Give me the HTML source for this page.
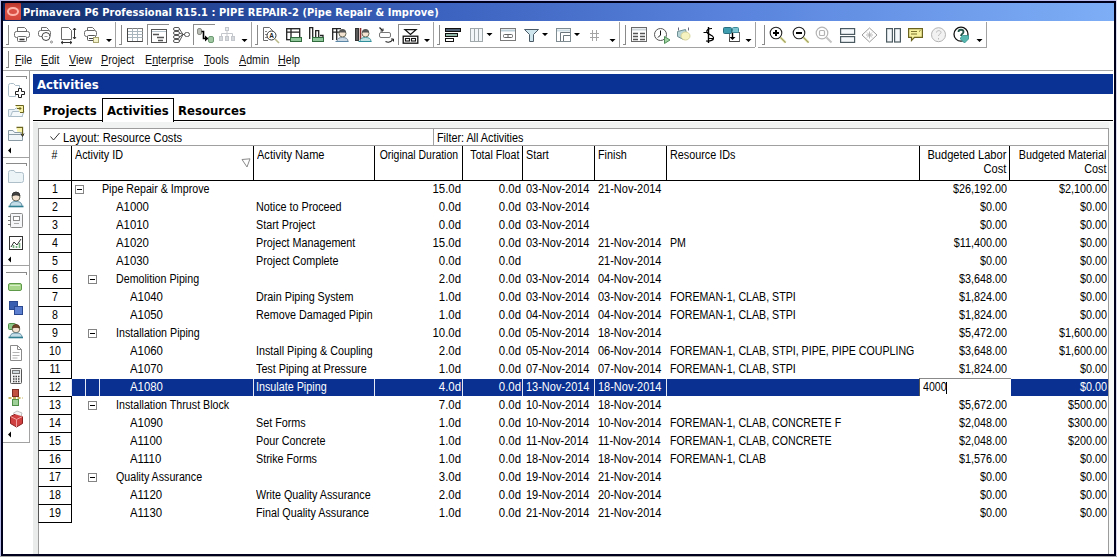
<!DOCTYPE html><html><head><meta charset="utf-8"><title>Primavera P6 Professional R15.1</title><style>html,body{margin:0;padding:0}
body{width:1117px;height:557px;position:relative;overflow:hidden;background:#fff;font-family:"Liberation Sans",sans-serif;font-size:12px;color:#000}
div,span,i,b{box-sizing:border-box}
.abs{position:absolute}
#frame{position:absolute;left:0;top:0;width:1117px;height:557px;background:#b9bdec}
#win{position:absolute;left:1px;top:1px;width:1115px;height:555px;background:#00001c}
#client{position:absolute;left:3px;top:3px;width:1111px;height:551px;background:#fff}
#rb{position:absolute;left:1116px;top:0;width:1px;height:557px;background:#d9dcec}
#bb{position:absolute;left:0;top:556px;width:1117px;height:1px;background:#a8a8a8}
#title{position:absolute;left:3px;top:3px;width:1111px;height:18px;background:linear-gradient(90deg,#0b1f58 0,rgb(16,46,106) 2%,rgb(37,70,150) 19%,rgb(59,98,190) 39%,rgb(88,130,220) 65%,rgb(126,174,246) 100%)}
#title .ico{position:absolute;left:2px;top:0;width:16px;height:17px;background:linear-gradient(180deg,#b8352c 0,#dc5246 45%,#d4453a 100%);border-radius:1px}
#title .ico i{position:absolute;left:2px;top:4px;width:12px;height:9px;border:2px solid #ffb4aa;border-radius:50%}
#title span{position:absolute;left:20px;top:3px;font:bold 11px "DejaVu Sans Condensed","DejaVu Sans","Liberation Sans",sans-serif;color:#fff;letter-spacing:0.07px;white-space:nowrap}
.tb{position:absolute;top:21px;height:27px;border-right:1px solid #9a9a9a;border-bottom:1px solid #a6a6a6;background:#fff}
.grip{position:absolute;top:4px;width:3px;height:19px;border-right:1px solid #8c8c8c;border-bottom:1px solid #8c8c8c}
.ic{position:absolute;top:0;left:0}
.dd{position:absolute;width:0;height:0;border-left:3px solid transparent;border-right:3px solid transparent;border-top:3px solid #000}
#menu{position:absolute;left:3px;top:48px;width:1110px;height:23px;border-bottom:1px solid #a6a6a6;font:12.5px "Liberation Sans",sans-serif}
#menu span{position:absolute;top:5px;white-space:nowrap;color:#111;transform:scaleX(.855);transform-origin:0 0}
#menu u{text-decoration:underline;text-underline-offset:1px}
#side{position:absolute;left:3px;top:71px;width:27px;height:372px;border-right:1px solid #9a9a9a;border-bottom:1px solid #a6a6a6}
.sl{position:absolute;left:3px;width:21px;height:3px;border-top:1px solid #8c8c8c;border-right:1px solid #8c8c8c}
.la{position:absolute;left:5px;width:0;height:0;border-top:3px solid transparent;border-bottom:3px solid transparent;border-right:3px solid #000}
#banner{position:absolute;left:33px;top:74px;width:1080px;height:20px;background:#0a3194;color:#fff}
#banner span{position:absolute;left:4px;top:3px;font:bold 13px "DejaVu Sans Condensed","Liberation Sans",sans-serif;letter-spacing:0}
#tabs{position:absolute;left:33px;top:97px;width:1080px;height:24px;border-bottom:1px solid #000}
#tabs span{position:absolute;top:6px;font:bold 13px "DejaVu Sans Condensed","Liberation Sans",sans-serif;letter-spacing:0;white-space:nowrap}
#tabs .act{position:absolute;left:69px;top:1px;width:72px;height:24px;border:1px solid #000;border-bottom:0;background:#fff}
#lstrip{position:absolute;left:33px;top:122px;width:5px;height:432px;background:#e9eceb}
#tstrip{position:absolute;left:33px;top:122px;width:1080px;height:6px;background:#f1f3f2}
#gridbox{position:absolute;left:38px;top:128px;width:1071px;height:426px;border-left:1px solid #9c9c9c;border-top:1px solid #9c9c9c;border-right:1px solid #9c9c9c;background:#fff}
#rstrip{position:absolute;left:1109px;top:122px;width:5px;height:432px;background:#f7f8f8}
#layout{position:absolute;left:39px;top:129px;width:1069px;height:17px;border-bottom:1px solid #a0a0a0}
#layout span{position:absolute;top:2px;white-space:nowrap;transform:scaleX(.885);transform-origin:0 0}
#filterbox{position:absolute;left:433px;top:129px;width:1px;height:16px;background:#a0a0a0}
#head{position:absolute;left:38px;top:146px;width:1071px;height:35px;border-bottom:1px solid #000}
.h{position:absolute;top:0;height:34px;border-left:1px solid #000;line-height:14px;padding-top:2px;white-space:nowrap}
.h span{display:block;transform:scaleX(.885)}
.h.l{padding-left:3px;text-align:left}.h.l span{transform-origin:0 0}
.h.r{text-align:right}.h.r span{position:absolute;right:4px;top:2px;text-align:right;transform-origin:100% 0}
.num span{display:block;transform:scaleX(.885)}
.row{position:absolute;left:0;width:1117px;height:18px}
.row .num{position:absolute;left:38px;top:0;width:34px;height:19px;border:1px solid #000;border-left-color:#555;text-align:center;line-height:17px;background:#fff}
.row .c{position:absolute;top:1px;height:17px;line-height:17px;white-space:nowrap;overflow:hidden}
.c.l{text-align:left;transform:scaleX(.885);transform-origin:0 0}.c.r{text-align:right;transform:scaleX(.885);transform-origin:100% 0}
.box{position:absolute;top:5px;width:9px;height:9px;border:1px solid #848484;background:#fff}
.box i{position:absolute;left:1px;top:3px;width:5px;height:1px;background:#000}
.row.sel{color:#fff}
.row.sel::before{content:"";position:absolute;left:72px;top:1px;width:1036px;height:17px;background:#0a3192}
.row.sel .num{color:#000}
.vs{position:absolute;top:1px;width:1px;height:17px;background:#e6eaf4}
.edit{position:absolute;top:0;height:18px;background:#fff;border-top:1px solid #8a8a8a;border-left:1px solid #555;color:#000}
.edit span{position:absolute;left:3px;top:0;line-height:17px;transform:scaleX(.885);transform-origin:0 0}
.edit b{position:absolute;left:26px;top:3px;width:1px;height:12px;background:#000}
</style></head><body>
<div id="frame"></div><div id="win"></div><div id="client"></div><div id="rb"></div><div id="bb"></div>
<div id="title"><div class="ico"><i></i></div><span>Primavera P6 Professional R15.1 : PIPE REPAIR-2 (Pipe Repair &amp; Improve)</span></div>

<!-- toolbar strip -->
<svg class="abs" style="left:0;top:21px" width="1117" height="28" viewBox="0 21 1117 28" fill="none" stroke-linecap="butt">
<!-- bottom lines + separators -->
<g stroke="#a2a2a2" stroke-width="1" shape-rendering="crispEdges">
<path d="M3 47.5H755M758 47.5H987"/>
<path d="M115.5 22V47M251.5 22V47M433.5 22V47M619.5 22V47M755.5 22V47M986.5 22V47"/>
</g>
<!-- grips -->
<g stroke="#8a8a8a" stroke-width="1" shape-rendering="crispEdges">
<path d="M8.5 25V44.5H6M121.5 25V44.5H119M257.5 25V44.5H255M439.5 25V44.5H437M625.5 25V44.5H623M764.5 25V44.5H762"/>
</g>
<!-- pressed frames -->
<g stroke="#8c8c8c" stroke-width="1" shape-rendering="crispEdges">
<path d="M147.5 45V24.5H169M193.5 45V24.5H215M398.5 45V24.5H420"/>
</g>
<!-- dropdown arrows -->
<g fill="#000" stroke="none">
<path d="M106 39h6l-3 3zM241.5 39h6l-3 3zM424 39h6l-3 3zM486.5 33h6l-3 3zM542 33h6l-3 3zM574 33h6l-3 3zM609.5 39h6l-3 3zM745.5 39h6l-3 3zM976.5 39h6l-3 3z"/>
</g>

<g stroke="#6a6a6a" stroke-width="1" fill="#fff">
<path fill="none" d="M17.5 31.5V27.5H24.5L26.5 29.5V31.5"/>
<rect x="14.5" y="31.5" width="15" height="6" rx="2"/>
<rect x="17.5" y="36.5" width="9" height="5" rx="1"/>
<path fill="none" d="M19.5 39.5H24.5" stroke="#333" stroke-width="1.6"/>
</g>
<g stroke="#6a6a6a" stroke-width="1" fill="#fff">
<path fill="none" d="M41.5 31V27.5H46.5L48.5 29.5V31"/>
<rect x="38.5" y="30.5" width="12" height="6" rx="2"/>
<circle cx="46" cy="36.5" r="4" stroke="#444"/>
<path fill="none" d="M44.5 36.5h3" stroke="#999"/>
<circle cx="51.5" cy="42" r="1" stroke="#888"/>
</g>
<g stroke="#6a6a6a" stroke-width="1" fill="#fff">
<path d="M61.5 27.5H68.5L71.5 30.5V39.5H61.5z"/>
<path fill="none" d="M74.5 28V39" stroke="#333"/><path d="M73 30l1.500 -2l1.500 2M73 37l1.500 2l1.500 -2" stroke="#333" fill="none"/>
<path fill="none" d="M61 42.500H72" stroke="#333"/><path d="M63 41l-2 1.500l2 1.500M70 41l2 1.500l-2 1.500" stroke="#333" fill="none"/>
</g>
<g stroke="#6a6a6a" stroke-width="1" fill="#fff">
<path fill="none" d="M87.500 30.500V27.500H92.500L94.500 29.500V30.500"/>
<rect x="84.500" y="30.500" width="12" height="6" rx="2"/>
<rect x="87.500" y="35.500" width="8" height="5" rx="1" stroke="#555"/>
<path fill="none" d="M89 38.500H94" stroke="#444"/>
<rect x="93.500" y="37.500" width="5" height="5" fill="#f4f2c8" stroke="#a8a470"/>
</g>

<g stroke="#7a7a7a" stroke-width="1" fill="#fff">
<rect x="127.500" y="28.500" width="15" height="13"/>
<path fill="none" d="M127.500 31.500H142.500M127.500 34.500H142.500M127.500 37.500H142.500M132.500 28.500V41.500M137.500 28.500V41.500" stroke="#a9b6bd"/>
<path fill="none" d="M127.500 28.500V41.500H142.500" stroke="#444"/>
</g>
<g stroke="#6a6a6a" stroke-width="1" fill="#fff">
<rect x="151.500" y="29.500" width="15" height="13" stroke="#555"/>
<path fill="none" d="M152 31.500H166" stroke="#b5c4cc"/>
<path fill="none" d="M153 34.500H159M157 37.500H164M158 40.500H163" stroke="#555" stroke-width="1.600"/>
</g>
<g stroke="#555" stroke-width="1" fill="#fff">
<rect x="173.500" y="27.500" width="6" height="3" rx="1.500"/><rect x="173.500" y="31.500" width="6" height="3" rx="1.500"/><rect x="173.500" y="35.500" width="6" height="3" rx="1.500"/><rect x="173.500" y="39.500" width="6" height="3" rx="1.500"/>
<path d="M179.500 29L183 34.500L179.500 41M179.500 33L183 34.500L179.500 37M183 34.500H185" fill="none"/>
<rect x="184.500" y="32.500" width="5" height="4" rx="2"/>
</g>
<g stroke-width="1">
<rect x="197.500" y="28.500" width="4" height="6" rx="1.500" fill="#b8bcb4" stroke="#8a8e86"/>
<path d="M201.500 31.500H203.500V38.500H207" stroke="#000" stroke-width="1.600" fill="none"/>
<path d="M205 35.500l3.500 3l-3.500 3z" fill="#000" stroke="none"/>
<rect x="208.500" y="36.500" width="5" height="6" rx="1.500" fill="#9fc7a2" stroke="#6d9a72"/>
</g>
<g stroke="#c4c8cc" stroke-width="1" fill="#e9ecee">
<rect x="225.500" y="27.500" width="3" height="3"/>
<path d="M221.500 36V33.500H232.500V36M227 31V36" fill="none"/>
<rect x="219.500" y="36.500" width="3" height="4" fill="#d5d9dc"/><rect x="225.500" y="36.500" width="3" height="4" fill="#d5d9dc"/><rect x="231.500" y="36.500" width="3" height="4" fill="#d5d9dc"/>
</g>

<g stroke="#6a6a6a" stroke-width="1" fill="#fff">
<path fill="none" d="M263.500 27.500H269.500L272.500 30.500V32M263.500 27.500V40.500H268"/>
<path fill="none" d="M265 31.500H267M265 34.500H267M265 37.500H267" stroke="#888"/>
<circle cx="271.500" cy="35.500" r="4.500" stroke="#333"/><text x="271.500" y="38" font-family="Liberation Sans, sans-serif" font-size="6.500" font-weight="bold" text-anchor="middle" fill="#222" stroke="none">A</text>
<path fill="none" d="M275 39l4 4" stroke="#b9b98a" stroke-width="1.600"/>
</g>
<g stroke="#222" stroke-width="1.300" fill="#fff">
<rect x="286.700" y="28.700" width="13" height="11"/>
<path fill="none" d="M287 32.200H300M291 28.700V40"/>
<rect x="290.500" y="37.500" width="11" height="4" fill="#8fc79a" stroke="#2f6b3c" stroke-width="1"/>
</g>
<g stroke="#222" stroke-width="1.300" fill="#fff">
<path fill="none" d="M309.700 39V27.700H312.700V39M315.700 39V30.700H318.700V39"/>
<path d="M320 35.500h3v3" fill="none"/>
<rect x="312.500" y="37.500" width="11" height="4" fill="#8fc79a" stroke="#2f6b3c" stroke-width="1"/>
</g>
<g stroke-width="1">
<path d="M332.700 40V28.700H341M336.700 28.700V40M333 32.200H340" stroke="#222" stroke-width="1.300" fill="none"/>
<circle cx="342.500" cy="33.500" r="3.500" fill="#f3e3d0" stroke="#6b6b5a"/>
<path d="M339 32.500a3.500 3.500 0 0 1 7 0z" fill="#555" stroke="none"/>
<path d="M337 41.500c0-3 2-4 5.500-4s5.500 1 5.500 4z" fill="#c9d6e4" stroke="#7a8a9a"/>
<path fill="none" d="M335.500 41.500H348.500" stroke="#5a87a8"/>
</g>
<g stroke-width="1">
<rect x="355.500" y="28.500" width="3" height="12" fill="#5a5a5a" stroke="#333"/>
<path fill="none" d="M360.500 28V40" stroke="#8c2f2f" stroke-width="1.600"/>
<circle cx="365.500" cy="33.500" r="3.500" fill="#f3e3d0" stroke="#6b6b5a"/>
<path d="M362 32.500a3.500 3.500 0 0 1 7 0z" fill="#555" stroke="none"/>
<path d="M360 41.500c0-3 2-4 5.500-4s5.500 1 5.500 4z" fill="#bfe0e2" stroke="#4a98a0"/>
<path fill="none" d="M358.500 41.500H371.500" stroke="#2f8f9a"/>
</g>
<g stroke="#777" stroke-width="1" fill="#fff">
<rect x="379.500" y="32.500" width="11" height="5" rx="1.500"/>
<path fill="none" d="M379.500 27.500l3 3" stroke="#222" stroke-width="1.300"/><path d="M380.500 31h2.500v-2.500" stroke="#222" fill="none"/>
<path d="M385.500 41.500c3 1.500 6 0 7.500-2" stroke="#222" fill="none" stroke-width="1.200"/><path d="M391 39h2.500v2.500" stroke="#222" fill="none"/>
</g>
<g stroke="#111" stroke-width="1.300" fill="#fff">
<path d="M405 29.700H416L410.500 34.500z"/>
<rect x="403.200" y="36.200" width="14.600" height="7"/>
<rect x="405.500" y="38.500" width="4" height="2.500" stroke-width="1.100"/><rect x="411.500" y="38.500" width="4" height="2.500" stroke-width="1.100"/>
</g>

<g stroke="#111" stroke-width="1" >
<rect x="445.500" y="28.500" width="15" height="3" fill="#4f5f73"/>
<rect x="445.500" y="33.500" width="12" height="3" fill="#8fb6a6"/>
<rect x="445.500" y="38.500" width="8" height="3" fill="#fff"/>
</g>
<g stroke="#a0a8ac" stroke-width="1" fill="#f2f6f8">
<rect x="470.500" y="28.500" width="4" height="13"/><rect x="474.500" y="28.500" width="4" height="13"/><rect x="478.500" y="28.500" width="4" height="13"/>
</g>
<g stroke="#7a7a7a" stroke-width="1" fill="#fff">
<rect x="500.500" y="28.500" width="15" height="12"/>
<path fill="none" d="M501 30.500H515" stroke="#bcd0da" stroke-width="2"/>
<rect x="503.500" y="34.500" width="9" height="3" rx="1" stroke="#666"/><path fill="none" d="M508 34.500v3" stroke="#666"/>
</g>
<g stroke="#4a5a66" stroke-width="1" fill="#cfe6ee">
<path d="M524.500 29.500H538.500L533.500 34.500V41.500H529.500V34.500z"/>
</g>
<g stroke="#7f8c92" stroke-width="1" fill="#fff">
<rect x="556.500" y="28.500" width="14" height="13"/>
<path fill="none" d="M557 30.500H570" stroke="#cfdde4" stroke-width="2"/>
<path d="M560.500 41V32.500H570M563.500 41V35.500H570" fill="none" stroke="#6a767c"/>
</g>
<g stroke="#a4a4a4" stroke-width="1" fill="none">
<path fill="none" d="M592.500 30V41M596.500 30V41M590 33.500H599M590 37.500H599"/>
</g>

<g stroke="#6a6a6a" stroke-width="1" fill="#fff">
<rect x="631.500" y="27.500" width="15" height="14"/>
<path fill="none" d="M632 29.500H646" stroke="#cfd6da" stroke-width="2"/>
<path fill="none" d="M633 33.500H638M640 33.500H645M633 36.500H638M640 36.500H645M633 39.500H638M640 39.500H645" stroke="#555" stroke-width="1.600"/>
</g>
<g stroke="#555" stroke-width="1" fill="#fff">
<circle cx="660.500" cy="34.500" r="6"/>
<path d="M660.500 30.500V35L658 37.500" stroke="#111" fill="none"/>
<path d="M664.500 36.500l5.500 3.500l-5.500 3.500z" fill="#9fd0a0" stroke="#4f8f58"/>
</g>
<g stroke-width="1">
<path fill="none" d="M678.500 27.500v3M688.500 27.500v3" stroke="#667"/>
<path d="M677.500 31.500l8-2l2 8l-4 2l-6-3z" fill="#b6d3d6" stroke="#6f9095"/>
<ellipse cx="685.500" cy="36" rx="4.500" ry="4" fill="#f7f3c0" stroke="#d8d49a"/>
</g>
<g stroke="#000" stroke-width="1.400" fill="none">
<path fill="none" d="M708.500 27V43"/><path fill="none" d="M712 28.500c-4 0-6 2-5 4s6 2.500 6.500 5s-3 4-7.500 3.500" stroke-width="1.200"/>
<path fill="none" d="M703.500 32.500h5M708 38.500h6" stroke-width="1.200"/>
</g>
<g stroke-width="1">
<rect x="729.500" y="32.500" width="10" height="9" fill="#fff" stroke="#6a6a6a"/>
<rect x="723.500" y="27.500" width="8" height="6" rx="1" fill="#3f9db0" stroke="#2a6f80"/>
<rect x="732.500" y="27.500" width="6" height="5" rx="1" fill="#7cc4d0" stroke="#3c8a98"/>
<path fill="none" d="M732.500 33v5" stroke="#000" stroke-width="1.400"/><path d="M729.500 37h6l-3 3z" fill="#000" stroke="none"/>
<path d="M729.500 38.500v3h10" stroke="#444" fill="none"/>
</g>

<g stroke="#222" stroke-width="1.100" fill="#fff">
<circle cx="776" cy="33" r="5.800"/>
<path fill="none" d="M773 33h6M776 30v6" stroke="#000" stroke-width="2"/>
<path fill="none" d="M780.500 37.500l5 5" stroke="#cfd08a" stroke-width="2.400"/><path fill="none" d="M780.300 37.300l5.400 5.400" stroke="#8a8a5a" stroke-width="0.700"/>
</g>
<g stroke="#222" stroke-width="1.100" fill="#fff">
<circle cx="799" cy="33" r="5.800"/>
<path fill="none" d="M796 33h6" stroke="#000" stroke-width="2"/>
<path fill="none" d="M803.500 37.500l5 5" stroke="#cfd08a" stroke-width="2.400"/><path fill="none" d="M803.300 37.300l5.400 5.400" stroke="#8a8a5a" stroke-width="0.700"/>
</g>
<g stroke="#b4b4b4" stroke-width="1.200" fill="#fff">
<circle cx="822" cy="33" r="5.800"/>
<rect x="819.500" y="30.500" width="5" height="5" rx="1"/>
<path fill="none" d="M826.500 37.500l5 5" stroke="#c4c4c4" stroke-width="2"/>
</g>
<g stroke="#4a5a60" stroke-width="1.200" fill="#f4f8fa">
<rect x="840.600" y="28.600" width="14" height="5.800"/><rect x="840.600" y="36.600" width="14" height="5.800"/>
</g>
<g stroke="#9a9a9a" stroke-width="1" fill="#fff">
<path d="M869.500 28l7.500 7l-7.500 7l-7.500-7z"/>
<path fill="none" d="M869.500 31.500v7M866 35h7M867 32.500l5 5M872 32.500l-5 5" stroke="#aaa" stroke-width="0.800"/>
</g>
<g stroke="#4a5a60" stroke-width="1.200" fill="#f4f8fa">
<rect x="886.600" y="28.600" width="5.800" height="13.400"/><rect x="894.600" y="28.600" width="5.800" height="13.400"/>
</g>
<g stroke="#6a6420" stroke-width="1.200" fill="#f7f2a0">
<path d="M908.600 28.600H922.400V37.400H914.500L911.500 40.500V37.400H908.600z"/>
<path d="M911 31.500h6M911 34h6M919 31.500l1.500-1" stroke="#6a6420" stroke-width="0.900" fill="none"/>
</g>
<g stroke="#b4b4b4" stroke-width="1" fill="#f2f2f2">
<circle cx="938.500" cy="34.700" r="7"/>
<path d="M936.500 32.500c0-2.500 4.500-2.500 4.500 0c0 1.500-2.500 1.500-2.500 3.500M938.500 38v1.500" fill="none" stroke="#bcbcbc"/>
</g>
<g stroke="#111" stroke-width="1.300" fill="#fff">
<circle cx="961" cy="34.200" r="7"/>
<path d="M958.500 32c0-3 5-3 5 0c0 1.800-2.500 1.800-2.500 4" fill="none" stroke="#23544a" stroke-width="1.800"/>
<path d="M962.500 35.500h6v3.500l-4 4l-4-4v-1z" fill="#56b7b0" stroke="#2f8f8a" stroke-width="0.800"/>
</g>

</svg>

<div id="menu">
<span style="left:12px"><u>F</u>ile</span><span style="left:38px"><u>E</u>dit</span><span style="left:66px"><u>V</u>iew</span><span style="left:98px"><u>P</u>roject</span><span style="left:142px">E<u>n</u>terprise</span><span style="left:201px"><u>T</u>ools</span><span style="left:236px"><u>A</u>dmin</span><span style="left:275px"><u>H</u>elp</span>
</div>
<svg class="abs" style="left:3px;top:48px" width="12" height="23" viewBox="3 48 12 23" fill="none" shape-rendering="crispEdges"><path d="M8.5 51V67.5H6" stroke="#8a8a8a"/></svg>

<!-- sidebar -->
<svg class="abs" style="left:0;top:71px" width="33" height="375" viewBox="0 71 33 375" fill="none">
<g stroke="#a2a2a2" shape-rendering="crispEdges"><path d="M29.5 71V443M3 442.5H30M3 157.5H29M3 265.5H29"/></g>
<g stroke="#8a8a8a" shape-rendering="crispEdges"><path d="M6 76.5H26.5V79M6 163.5H26.5V166M6 272.5H26.5V275"/></g>
<g fill="#000" stroke="none"><path d="M11 147.5v6l-3-3zM11 256.5v6l-3-3zM11 431.5v6l-3-3z"/></g>

<g stroke="#a9bcc8" stroke-width="1" fill="#eaf2f7">
<path fill="none" d="M8.500 95.500V85.500Q8.500 83.500 10.500 83.500H13.500L15.500 85.500H19.500V88M8.500 95.500Q8.500 96.500 10 96.500H15.500V94.500"/>
</g>
<path d="M18.500 88.500h3v3h3v3h-3v3h-3v-3h-3v-3h3z" fill="#fff" stroke="#222" stroke-width="1"/>
<g stroke-width="1">
<path d="M8.500 116.500V109.500H14.500L16 108H22.500V116.500z" fill="#eaf2f7" stroke="#a9bcc8"/>
<path d="M10.500 116.500L12.500 111.500H24L22 116.500z" fill="#f4f8fa" stroke="#a9bcc8"/>
<path d="M15.500 105.500H23.500V112.500H20" fill="#f7f2a8" stroke="#6a6420"/>
<path d="M17 108.500h4M19.500 107l1.500 1.500l-1.500 1.500" stroke="#6a6420" fill="none"/>
</g>
<g stroke-width="1">
<path d="M8.500 140.500V130.500H13L14.500 132.500H22.500V140.500z" fill="#f0f5f8" stroke="#8a9aa4"/>
<path fill="none" d="M8.500 134.500H22.500" stroke="#8a9aa4"/>
<path d="M16.500 127.500H22.500V136" fill="none" stroke="#6a6420" stroke-width="1.300"/>
<path d="M17 131.500V128H22V132.500" fill="#f7f2a8" stroke="none"/>
<path d="M21 133.500l1.500 3l1.500-3" stroke="#333" fill="none"/>
</g>

<g stroke-width="1">
<path d="M8.500 182.500V172.500Q8.500 170.500 10.500 170.500H14L15.500 172.500H21.500Q23.500 172.500 23.500 174.500V180.500Q23.500 182.500 21.500 182.500z" fill="#edf4f8" stroke="#aebfca"/>
</g>
<g stroke-width="1">
<circle cx="16" cy="197" r="4" fill="#f3e3d0" stroke="#6b6b5a"/>
<path d="M12 196a4 4 0 0 1 8 0c-2-1.500-6-1.500-8 0z" fill="#444" stroke="#333"/>
<path d="M10 206.500c0-4 2.500-5 6-5s6 1 6 5z" fill="#c4dde6" stroke="#5a8aa0"/>
<path fill="none" d="M8.500 206.500H23.500" stroke="#2f7f90" stroke-width="1.600"/>
</g>
<g stroke="#8a8a8a" stroke-width="1" fill="#f4f6f7">
<rect x="10.500" y="213.500" width="12" height="14" rx="1"/>
<rect x="13.500" y="216.500" width="6" height="4" fill="#fff"/>
<path fill="none" d="M8 216.500h3M8 220.500h3M8 224.500h3" stroke="#777"/>
<path fill="none" d="M14 223.500h5" stroke="#aaa"/>
</g>
<g stroke-width="1">
<rect x="9.500" y="236.500" width="13" height="13" fill="#fff" stroke="#333"/>
<path d="M11 247l3-5l3 3l4-6" stroke="#333" fill="none"/>
<path fill="none" d="M13.500 248v-3M16.500 248v-2M19.500 248v-5" stroke="#6fae7a" stroke-width="1.600"/>
</g>

<rect x="8.500" y="283.500" width="13" height="7" rx="1.500" fill="#a8d78c" stroke="#5f9a4a"/>
<path fill="none" d="M10 285.500h10" stroke="#d6efc6"/>
<rect x="9.500" y="301.500" width="8" height="8" fill="#3a5fb0" stroke="#2a4890"/>
<rect x="14.500" y="306.500" width="8" height="8" fill="#5c7fd0" stroke="#2a4890"/>
<g stroke-width="1">
<rect x="8.500" y="323.500" width="7" height="6" rx="1" fill="#8fc78a" stroke="#4f8f4a"/>
<circle cx="16" cy="329" r="3.800" fill="#f3e3d0" stroke="#6b6b5a"/>
<path d="M12.500 328a3.500 3.500 0 0 1 7 0c-2-1-5-1-7 0z" fill="#7a4a2a" stroke="#5a3a20"/>
<path d="M10 337.500c0-3.500 2.500-4.500 6-4.500s6 1 6 4.500z" fill="#c4dde6" stroke="#5a8aa0"/>
<path fill="none" d="M8.500 337.500H23" stroke="#2f7f90" stroke-width="1.600"/>
</g>
<g stroke="#8a8a8a" stroke-width="1" fill="#fff">
<path d="M10.500 345.500H17.500L21.500 349.500V360.500H10.500z"/><path d="M17.500 345.500V349.500H21.500" fill="none"/>
<path fill="none" d="M12.500 352.500h7M12.500 355.500h7M12.500 358h5" stroke="#b4b4b4"/>
</g>
<g stroke="#555" stroke-width="1" fill="#f4f4f4">
<rect x="10.500" y="368.500" width="11" height="15" rx="1"/>
<rect x="12.500" y="370.500" width="7" height="3" fill="#cfd8dc" stroke="#777"/>
<path fill="none" d="M13 376.500h1.500M15.500 376.500h1.500M18 376.500h1.500M13 379h1.500M15.500 379h1.500M18 379h1.500M13 381.500h1.500M15.500 381.500h1.500M18 381.500h1.500" stroke="#444" stroke-width="1.400"/>
</g>
<g stroke-width="1">
<rect x="12.500" y="389.500" width="6" height="7" fill="#c05040" stroke="#7a2a20"/>
<rect x="12.500" y="399.500" width="6" height="6" fill="#9fd09a" stroke="#4f8f4a"/>
<path fill="none" d="M8.500 398h14" stroke="#b8a030" stroke-width="1.600" stroke-dasharray="3 1.500"/>
</g>
<g stroke-width="1">
<path d="M10.500 416.500l6-3l6 3v7l-6 3.500l-6-3.500z" fill="#d04040" stroke="#8a2020"/>
<path d="M10.500 416.500l6 3l6-3M16.500 419.500v7.500" stroke="#f0a0a0" fill="none"/>
<path d="M13 413.500l4-2.500l5 2l-1 3" fill="#f4f4f4" stroke="#c0c0c0"/>
</g>

</svg>

<div id="banner"><span>Activities</span></div>
<div id="tabs"><div class="act"></div><span style="left:10px">Projects</span><span style="left:74px">Activities</span><span style="left:145px">Resources</span></div>
<div id="tstrip"></div><div id="lstrip"></div><div id="rstrip"></div>
<div id="gridbox"></div>
<div id="layout"><svg class="abs" style="left:11px;top:3px" width="10" height="9" viewBox="0 0 10 9" fill="none" stroke="#333" stroke-width="1"><path d="M0.5 4.5L3.5 8L9.5 1"/></svg><span style="left:24px;transform:scaleX(.93)">Layout: Resource Costs</span><span style="left:398px;transform:scaleX(.9)">Filter: All Activities</span></div>
<div id="filterbox"></div>
<div id="head">
<div class="h" style="left:0px;width:33px;border-left:0;text-align:center"><span style="transform:scaleX(0.885)">#</span></div>
<div class="h l" style="left:33px;width:182px"><span style="transform:scaleX(0.9)">Activity ID</span></div>
<div class="h l" style="left:215px;width:121px"><span style="transform:scaleX(0.92)">Activity Name</span></div>
<div class="h r" style="left:336px;width:88px"><span style="transform:scaleX(0.87);right:4px">Original Duration</span></div>
<div class="h r" style="left:424px;width:60px"><span style="transform:scaleX(0.885);right:2.5px">Total Float</span></div>
<div class="h l" style="left:484px;width:72px"><span style="transform:scaleX(0.9)">Start</span></div>
<div class="h l" style="left:556px;width:72px"><span style="transform:scaleX(0.9)">Finish</span></div>
<div class="h l" style="left:628px;width:253px"><span style="transform:scaleX(0.9)">Resource IDs</span></div>
<div class="h r" style="left:881px;width:90px"><span style="transform:scaleX(0.925);right:2.5px">Budgeted Labor<br>Cost</span></div>
<div class="h r" style="left:971px;width:99px"><span style="transform:scaleX(0.9);right:2px">Budgeted Material<br>Cost</span></div>
<svg class="abs" style="left:203px;top:12px" width="10" height="10" viewBox="0 0 10 10" fill="none" stroke="#8a8a8a" stroke-width="1"><path d="M1 1.5L9 0.8L6 9z"/></svg>
</div>

<div class="row" style="top:180px">
<div class="num"><span>1</span></div>
<div class="box" style="left:75px"><i></i></div>
<div class="c l" style="left:102px;width:167px;transform:scaleX(0.89)">Pipe Repair &amp; Improve</div>
<div class="c r" style="left:375px;width:86px;transform:scaleX(0.95)">15.0d</div>
<div class="c r" style="left:463px;width:58px;transform:scaleX(0.95)">0.0d</div>
<div class="c l" style="left:526px;width:73px;transform:scaleX(0.915)">03-Nov-2014</div>
<div class="c l" style="left:598px;width:73px;transform:scaleX(0.915)">21-Nov-2014</div>
<div class="c r" style="left:920px;width:87px;transform:scaleX(0.9)">$26,192.00</div>
<div class="c r" style="left:1010px;width:97px;transform:scaleX(0.9)">$2,100.00</div>
</div>
<div class="row" style="top:198px">
<div class="num"><span>2</span></div>
<div class="c l" style="left:116px;width:142px;transform:scaleX(0.95)">A1000</div>
<div class="c l" style="left:256px;width:130px;transform:scaleX(0.897)">Notice to Proceed</div>
<div class="c r" style="left:375px;width:86px;transform:scaleX(0.95)">0.0d</div>
<div class="c r" style="left:463px;width:58px;transform:scaleX(0.95)">0.0d</div>
<div class="c l" style="left:526px;width:73px;transform:scaleX(0.915)">03-Nov-2014</div>
<div class="c r" style="left:920px;width:87px;transform:scaleX(0.9)">$0.00</div>
<div class="c r" style="left:1010px;width:97px;transform:scaleX(0.9)">$0.00</div>
</div>
<div class="row" style="top:216px">
<div class="num"><span>3</span></div>
<div class="c l" style="left:116px;width:142px;transform:scaleX(0.95)">A1010</div>
<div class="c l" style="left:256px;width:130px;transform:scaleX(0.897)">Start Project</div>
<div class="c r" style="left:375px;width:86px;transform:scaleX(0.95)">0.0d</div>
<div class="c r" style="left:463px;width:58px;transform:scaleX(0.95)">0.0d</div>
<div class="c l" style="left:526px;width:73px;transform:scaleX(0.915)">03-Nov-2014</div>
<div class="c r" style="left:920px;width:87px;transform:scaleX(0.9)">$0.00</div>
<div class="c r" style="left:1010px;width:97px;transform:scaleX(0.9)">$0.00</div>
</div>
<div class="row" style="top:234px">
<div class="num"><span>4</span></div>
<div class="c l" style="left:116px;width:142px;transform:scaleX(0.95)">A1020</div>
<div class="c l" style="left:256px;width:130px;transform:scaleX(0.897)">Project Management</div>
<div class="c r" style="left:375px;width:86px;transform:scaleX(0.95)">15.0d</div>
<div class="c r" style="left:463px;width:58px;transform:scaleX(0.95)">0.0d</div>
<div class="c l" style="left:526px;width:73px;transform:scaleX(0.915)">03-Nov-2014</div>
<div class="c l" style="left:598px;width:73px;transform:scaleX(0.915)">21-Nov-2014</div>
<div class="c l" style="left:670px;width:280px;transform:scaleX(0.885)">PM</div>
<div class="c r" style="left:920px;width:87px;transform:scaleX(0.9)">$11,400.00</div>
<div class="c r" style="left:1010px;width:97px;transform:scaleX(0.9)">$0.00</div>
</div>
<div class="row" style="top:252px">
<div class="num"><span>5</span></div>
<div class="c l" style="left:116px;width:142px;transform:scaleX(0.95)">A1030</div>
<div class="c l" style="left:256px;width:130px;transform:scaleX(0.897)">Project Complete</div>
<div class="c r" style="left:375px;width:86px;transform:scaleX(0.95)">0.0d</div>
<div class="c r" style="left:463px;width:58px;transform:scaleX(0.95)">0.0d</div>
<div class="c l" style="left:598px;width:73px;transform:scaleX(0.915)">21-Nov-2014</div>
<div class="c r" style="left:920px;width:87px;transform:scaleX(0.9)">$0.00</div>
<div class="c r" style="left:1010px;width:97px;transform:scaleX(0.9)">$0.00</div>
</div>
<div class="row" style="top:270px">
<div class="num"><span>6</span></div>
<div class="box" style="left:88px"><i></i></div>
<div class="c l" style="left:116px;width:152px;transform:scaleX(0.89)">Demolition Piping</div>
<div class="c r" style="left:375px;width:86px;transform:scaleX(0.95)">2.0d</div>
<div class="c r" style="left:463px;width:58px;transform:scaleX(0.95)">0.0d</div>
<div class="c l" style="left:526px;width:73px;transform:scaleX(0.915)">03-Nov-2014</div>
<div class="c l" style="left:598px;width:73px;transform:scaleX(0.915)">04-Nov-2014</div>
<div class="c r" style="left:920px;width:87px;transform:scaleX(0.9)">$3,648.00</div>
<div class="c r" style="left:1010px;width:97px;transform:scaleX(0.9)">$0.00</div>
</div>
<div class="row" style="top:288px">
<div class="num"><span>7</span></div>
<div class="c l" style="left:130px;width:127px;transform:scaleX(0.95)">A1040</div>
<div class="c l" style="left:256px;width:130px;transform:scaleX(0.897)">Drain Piping System</div>
<div class="c r" style="left:375px;width:86px;transform:scaleX(0.95)">1.0d</div>
<div class="c r" style="left:463px;width:58px;transform:scaleX(0.95)">0.0d</div>
<div class="c l" style="left:526px;width:73px;transform:scaleX(0.915)">03-Nov-2014</div>
<div class="c l" style="left:598px;width:73px;transform:scaleX(0.915)">03-Nov-2014</div>
<div class="c l" style="left:670px;width:280px;transform:scaleX(0.885)">FOREMAN-1, CLAB, STPI</div>
<div class="c r" style="left:920px;width:87px;transform:scaleX(0.9)">$1,824.00</div>
<div class="c r" style="left:1010px;width:97px;transform:scaleX(0.9)">$0.00</div>
</div>
<div class="row" style="top:306px">
<div class="num"><span>8</span></div>
<div class="c l" style="left:130px;width:127px;transform:scaleX(0.95)">A1050</div>
<div class="c l" style="left:256px;width:130px;transform:scaleX(0.897)">Remove Damaged Piping</div>
<div class="c r" style="left:375px;width:86px;transform:scaleX(0.95)">1.0d</div>
<div class="c r" style="left:463px;width:58px;transform:scaleX(0.95)">0.0d</div>
<div class="c l" style="left:526px;width:73px;transform:scaleX(0.915)">04-Nov-2014</div>
<div class="c l" style="left:598px;width:73px;transform:scaleX(0.915)">04-Nov-2014</div>
<div class="c l" style="left:670px;width:280px;transform:scaleX(0.885)">FOREMAN-1, CLAB, STPI</div>
<div class="c r" style="left:920px;width:87px;transform:scaleX(0.9)">$1,824.00</div>
<div class="c r" style="left:1010px;width:97px;transform:scaleX(0.9)">$0.00</div>
</div>
<div class="row" style="top:324px">
<div class="num"><span>9</span></div>
<div class="box" style="left:88px"><i></i></div>
<div class="c l" style="left:116px;width:152px;transform:scaleX(0.89)">Installation Piping</div>
<div class="c r" style="left:375px;width:86px;transform:scaleX(0.95)">10.0d</div>
<div class="c r" style="left:463px;width:58px;transform:scaleX(0.95)">0.0d</div>
<div class="c l" style="left:526px;width:73px;transform:scaleX(0.915)">05-Nov-2014</div>
<div class="c l" style="left:598px;width:73px;transform:scaleX(0.915)">18-Nov-2014</div>
<div class="c r" style="left:920px;width:87px;transform:scaleX(0.9)">$5,472.00</div>
<div class="c r" style="left:1010px;width:97px;transform:scaleX(0.9)">$1,600.00</div>
</div>
<div class="row" style="top:342px">
<div class="num"><span>10</span></div>
<div class="c l" style="left:130px;width:127px;transform:scaleX(0.95)">A1060</div>
<div class="c l" style="left:256px;width:130px;transform:scaleX(0.897)">Install Piping &amp; Couplings</div>
<div class="c r" style="left:375px;width:86px;transform:scaleX(0.95)">2.0d</div>
<div class="c r" style="left:463px;width:58px;transform:scaleX(0.95)">0.0d</div>
<div class="c l" style="left:526px;width:73px;transform:scaleX(0.915)">05-Nov-2014</div>
<div class="c l" style="left:598px;width:73px;transform:scaleX(0.915)">06-Nov-2014</div>
<div class="c l" style="left:670px;width:280px;transform:scaleX(0.885)">FOREMAN-1, CLAB, STPI, PIPE, PIPE COUPLING</div>
<div class="c r" style="left:920px;width:87px;transform:scaleX(0.9)">$3,648.00</div>
<div class="c r" style="left:1010px;width:97px;transform:scaleX(0.9)">$1,600.00</div>
</div>
<div class="row" style="top:360px">
<div class="num"><span>11</span></div>
<div class="c l" style="left:130px;width:127px;transform:scaleX(0.95)">A1070</div>
<div class="c l" style="left:256px;width:130px;transform:scaleX(0.897)">Test Piping at Pressure</div>
<div class="c r" style="left:375px;width:86px;transform:scaleX(0.95)">1.0d</div>
<div class="c r" style="left:463px;width:58px;transform:scaleX(0.95)">0.0d</div>
<div class="c l" style="left:526px;width:73px;transform:scaleX(0.915)">07-Nov-2014</div>
<div class="c l" style="left:598px;width:73px;transform:scaleX(0.915)">07-Nov-2014</div>
<div class="c l" style="left:670px;width:280px;transform:scaleX(0.885)">FOREMAN-1, CLAB, STPI</div>
<div class="c r" style="left:920px;width:87px;transform:scaleX(0.9)">$1,824.00</div>
<div class="c r" style="left:1010px;width:97px;transform:scaleX(0.9)">$0.00</div>
</div>
<div class="row sel" style="top:378px">
<div class="num"><span>12</span></div>
<div class="c l" style="left:130px;width:127px;transform:scaleX(0.95)">A1080</div>
<div class="c l" style="left:256px;width:130px;transform:scaleX(0.897)">Insulate Piping</div>
<div class="c r" style="left:375px;width:86px;transform:scaleX(0.95)">4.0d</div>
<div class="c r" style="left:463px;width:58px;transform:scaleX(0.95)">0.0d</div>
<div class="c l" style="left:526px;width:73px;transform:scaleX(0.915)">13-Nov-2014</div>
<div class="c l" style="left:598px;width:73px;transform:scaleX(0.915)">18-Nov-2014</div>
<div class="edit" style="left:919px;width:92px"><span>4000</span><b></b></div>
<div class="c r" style="left:1010px;width:97px;transform:scaleX(0.9)">$0.00</div>
<div class="vs" style="left:71px"></div>
<div class="vs" style="left:253px"></div>
<div class="vs" style="left:374px"></div>
<div class="vs" style="left:462px"></div>
<div class="vs" style="left:522px"></div>
<div class="vs" style="left:594px"></div>
<div class="vs" style="left:666px"></div>
<div class="vs" style="left:85px"></div><div class="vs" style="left:99px"></div>
</div>
<div class="row" style="top:396px">
<div class="num"><span>13</span></div>
<div class="box" style="left:88px"><i></i></div>
<div class="c l" style="left:116px;width:152px;transform:scaleX(0.89)">Installation Thrust Block</div>
<div class="c r" style="left:375px;width:86px;transform:scaleX(0.95)">7.0d</div>
<div class="c r" style="left:463px;width:58px;transform:scaleX(0.95)">0.0d</div>
<div class="c l" style="left:526px;width:73px;transform:scaleX(0.915)">10-Nov-2014</div>
<div class="c l" style="left:598px;width:73px;transform:scaleX(0.915)">18-Nov-2014</div>
<div class="c r" style="left:920px;width:87px;transform:scaleX(0.9)">$5,672.00</div>
<div class="c r" style="left:1010px;width:97px;transform:scaleX(0.9)">$500.00</div>
</div>
<div class="row" style="top:414px">
<div class="num"><span>14</span></div>
<div class="c l" style="left:130px;width:127px;transform:scaleX(0.95)">A1090</div>
<div class="c l" style="left:256px;width:130px;transform:scaleX(0.897)">Set Forms</div>
<div class="c r" style="left:375px;width:86px;transform:scaleX(0.95)">1.0d</div>
<div class="c r" style="left:463px;width:58px;transform:scaleX(0.95)">0.0d</div>
<div class="c l" style="left:526px;width:73px;transform:scaleX(0.915)">10-Nov-2014</div>
<div class="c l" style="left:598px;width:73px;transform:scaleX(0.915)">10-Nov-2014</div>
<div class="c l" style="left:670px;width:280px;transform:scaleX(0.885)">FOREMAN-1, CLAB, CONCRETE F</div>
<div class="c r" style="left:920px;width:87px;transform:scaleX(0.9)">$2,048.00</div>
<div class="c r" style="left:1010px;width:97px;transform:scaleX(0.9)">$300.00</div>
</div>
<div class="row" style="top:432px">
<div class="num"><span>15</span></div>
<div class="c l" style="left:130px;width:127px;transform:scaleX(0.95)">A1100</div>
<div class="c l" style="left:256px;width:130px;transform:scaleX(0.897)">Pour Concrete</div>
<div class="c r" style="left:375px;width:86px;transform:scaleX(0.95)">1.0d</div>
<div class="c r" style="left:463px;width:58px;transform:scaleX(0.95)">0.0d</div>
<div class="c l" style="left:526px;width:73px;transform:scaleX(0.915)">11-Nov-2014</div>
<div class="c l" style="left:598px;width:73px;transform:scaleX(0.915)">11-Nov-2014</div>
<div class="c l" style="left:670px;width:280px;transform:scaleX(0.885)">FOREMAN-1, CLAB, CONCRETE</div>
<div class="c r" style="left:920px;width:87px;transform:scaleX(0.9)">$2,048.00</div>
<div class="c r" style="left:1010px;width:97px;transform:scaleX(0.9)">$200.00</div>
</div>
<div class="row" style="top:450px">
<div class="num"><span>16</span></div>
<div class="c l" style="left:130px;width:127px;transform:scaleX(0.95)">A1110</div>
<div class="c l" style="left:256px;width:130px;transform:scaleX(0.897)">Strike Forms</div>
<div class="c r" style="left:375px;width:86px;transform:scaleX(0.95)">1.0d</div>
<div class="c r" style="left:463px;width:58px;transform:scaleX(0.95)">0.0d</div>
<div class="c l" style="left:526px;width:73px;transform:scaleX(0.915)">18-Nov-2014</div>
<div class="c l" style="left:598px;width:73px;transform:scaleX(0.915)">18-Nov-2014</div>
<div class="c l" style="left:670px;width:280px;transform:scaleX(0.885)">FOREMAN-1, CLAB</div>
<div class="c r" style="left:920px;width:87px;transform:scaleX(0.9)">$1,576.00</div>
<div class="c r" style="left:1010px;width:97px;transform:scaleX(0.9)">$0.00</div>
</div>
<div class="row" style="top:468px">
<div class="num"><span>17</span></div>
<div class="box" style="left:88px"><i></i></div>
<div class="c l" style="left:116px;width:152px;transform:scaleX(0.89)">Quality Assurance</div>
<div class="c r" style="left:375px;width:86px;transform:scaleX(0.95)">3.0d</div>
<div class="c r" style="left:463px;width:58px;transform:scaleX(0.95)">0.0d</div>
<div class="c l" style="left:526px;width:73px;transform:scaleX(0.915)">19-Nov-2014</div>
<div class="c l" style="left:598px;width:73px;transform:scaleX(0.915)">21-Nov-2014</div>
<div class="c r" style="left:920px;width:87px;transform:scaleX(0.9)">$0.00</div>
<div class="c r" style="left:1010px;width:97px;transform:scaleX(0.9)">$0.00</div>
</div>
<div class="row" style="top:486px">
<div class="num"><span>18</span></div>
<div class="c l" style="left:130px;width:127px;transform:scaleX(0.95)">A1120</div>
<div class="c l" style="left:256px;width:130px;transform:scaleX(0.897)">Write Quality Assurance</div>
<div class="c r" style="left:375px;width:86px;transform:scaleX(0.95)">2.0d</div>
<div class="c r" style="left:463px;width:58px;transform:scaleX(0.95)">0.0d</div>
<div class="c l" style="left:526px;width:73px;transform:scaleX(0.915)">19-Nov-2014</div>
<div class="c l" style="left:598px;width:73px;transform:scaleX(0.915)">20-Nov-2014</div>
<div class="c r" style="left:920px;width:87px;transform:scaleX(0.9)">$0.00</div>
<div class="c r" style="left:1010px;width:97px;transform:scaleX(0.9)">$0.00</div>
</div>
<div class="row" style="top:504px">
<div class="num"><span>19</span></div>
<div class="c l" style="left:130px;width:127px;transform:scaleX(0.95)">A1130</div>
<div class="c l" style="left:256px;width:130px;transform:scaleX(0.897)">Final Quality Assurance</div>
<div class="c r" style="left:375px;width:86px;transform:scaleX(0.95)">1.0d</div>
<div class="c r" style="left:463px;width:58px;transform:scaleX(0.95)">0.0d</div>
<div class="c l" style="left:526px;width:73px;transform:scaleX(0.915)">21-Nov-2014</div>
<div class="c l" style="left:598px;width:73px;transform:scaleX(0.915)">21-Nov-2014</div>
<div class="c r" style="left:920px;width:87px;transform:scaleX(0.9)">$0.00</div>
<div class="c r" style="left:1010px;width:97px;transform:scaleX(0.9)">$0.00</div>
</div>
</body></html>
